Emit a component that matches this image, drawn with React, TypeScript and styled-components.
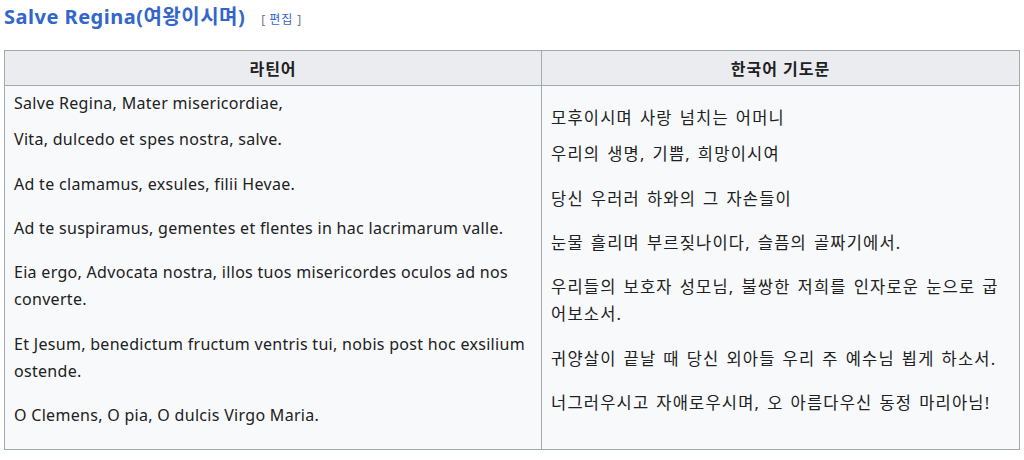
import React from "react";
import styled, { createGlobalStyle } from "styled-components";

const Global = createGlobalStyle`
  html, body { margin: 0; padding: 0; background: #ffffff; }
  body {
    font-family: "Noto Sans", "Noto Sans CJK KR", sans-serif;
    color: #202122;
  }
`;

const Page = styled.div`
  padding: 0 4px;
`;

const Heading = styled.h2`
  margin: 0 0 16px;
  display: flex;
  align-items: baseline;
  gap: 16px;
  height: 34px;
  line-height: 34px;
`;

const Title = styled.span`
  font-size: 20px;
  font-weight: 700;
  letter-spacing: 0.5px;
  color: #3366cc;
`;

const EditLinks = styled.span`
  font-size: 12px;
  font-weight: 400;
  color: #72777d;
`;

const EditLink = styled.a`
  color: #3366cc;
  text-decoration: none;
  margin: 0 4px;
  letter-spacing: 1px;
`;

const Table = styled.table`
  width: 100%;
  table-layout: fixed;
  border-collapse: collapse;
  background: #f8f9fa;
  border: 1px solid #a2a9b1;
`;

const Col = styled.col<{ $w?: string }>`
  width: ${(p) => p.$w || "auto"};
`;

const HeadCell = styled.th`
  background: #eaecf0;
  border: 1px solid #a2a9b1;
  height: 34px;
  padding: 0 8px;
  text-align: center;
  font-weight: 700;
  font-size: 16px;
  letter-spacing: 1px;
`;

const Cell = styled.td<{ $lang: "la" | "ko" }>`
  border: 1px solid #a2a9b1;
  padding: 4px 8px 4px 9px;
  vertical-align: middle;
  font-size: ${(p) => (p.$lang === "ko" ? "16.5px" : "16px")};
  letter-spacing: ${(p) => (p.$lang === "ko" ? "1.2px" : "0.3px")};
  word-spacing: ${(p) => (p.$lang === "ko" ? "1.5px" : "0")};
`;

const Line = styled.p<{ $gap: number; $last?: boolean }>`
  margin: ${(p) => p.$gap}px 0 ${(p) => (p.$last ? 16 : 0)}px;
  line-height: 27px;
`;

const latin = [
  "Salve Regina, Mater misericordiae,",
  "Vita, dulcedo et spes nostra, salve.",
  "Ad te clamamus, exsules, filii Hevae.",
  "Ad te suspiramus, gementes et flentes in hac lacrimarum valle.",
  "Eia ergo, Advocata nostra, illos tuos misericordes oculos ad nos converte.",
  "Et Jesum, benedictum fructum ventris tui, nobis post hoc exsilium ostende.",
  "O Clemens, O pia, O dulcis Virgo Maria.",
];

const korean = [
  "모후이시며 사랑 넘치는 어머니",
  "우리의 생명, 기쁨, 희망이시여",
  "당신 우러러 하와의 그 자손들이",
  "눈물 흘리며 부르짖나이다, 슬픔의 골짜기에서.",
  "우리들의 보호자 성모님, 불쌍한 저희를 인자로운 눈으로 굽어보소서.",
  "귀양살이 끝날 때 당신 외아들 우리 주 예수님 뵙게 하소서.",
  "너그러우시고 자애로우시며, 오 아름다우신 동정 마리아님!",
];

const gaps = [0, 9, 18, 17, 17, 18, 17];

export default function App() {
  return (
    <Page>
      <Global />
      <Heading>
        <Title>Salve Regina(여왕이시며)</Title>
        <EditLinks>
          [<EditLink href="#">편집</EditLink>]
        </EditLinks>
      </Heading>
      <Table>
        <colgroup>
          <Col $w="537px" />
          <Col />
        </colgroup>
        <thead>
          <tr>
            <HeadCell>라틴어</HeadCell>
            <HeadCell>한국어 기도문</HeadCell>
          </tr>
        </thead>
        <tbody>
          <tr>
            <Cell $lang="la">
              {latin.map((t, i) => (
                <Line key={i} $gap={gaps[i]} $last={i === latin.length - 1}>
                  {t}
                </Line>
              ))}
            </Cell>
            <Cell $lang="ko">
              {korean.map((t, i) => (
                <Line key={i} $gap={gaps[i]} $last={i === korean.length - 1}>
                  {t}
                </Line>
              ))}
            </Cell>
          </tr>
        </tbody>
      </Table>
    </Page>
  );
}
